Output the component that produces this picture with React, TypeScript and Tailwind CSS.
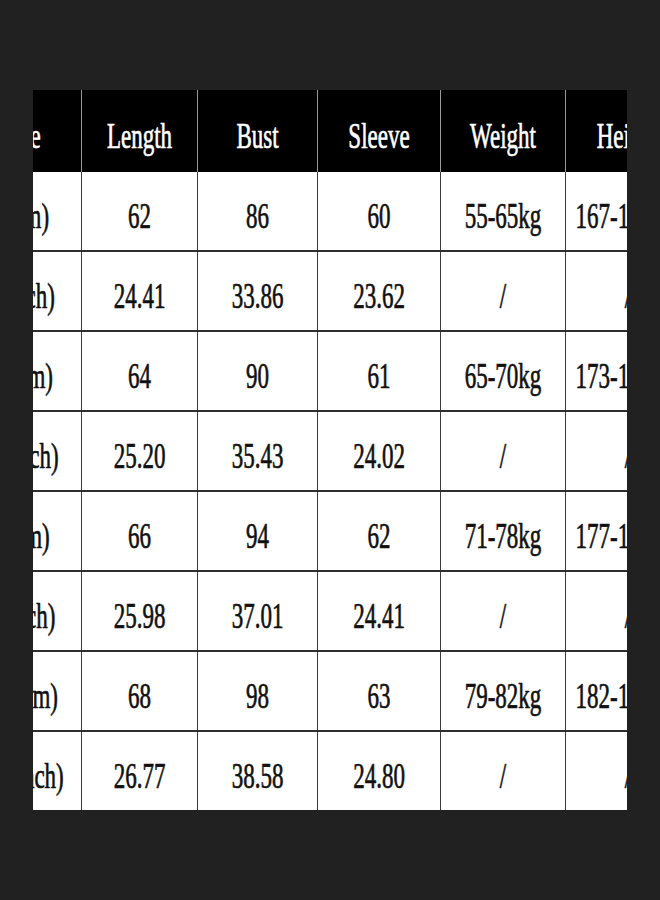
const headers = ["Size", "Length", "Bust", "Sleeve", "Weight", "Height"];

const rows = [
  ["S(cm)", "62", "86", "60", "55-65kg", "167-172cm"],
  ["S(inch)", "24.41", "33.86", "23.62", "/", "/"],
  ["M(cm)", "64", "90", "61", "65-70kg", "173-177cm"],
  ["M(inch)", "25.20", "35.43", "24.02", "/", "/"],
  ["L(cm)", "66", "94", "62", "71-78kg", "177-182cm"],
  ["L(inch)", "25.98", "37.01", "24.41", "/", "/"],
  ["XL(cm)", "68", "98", "63", "79-82kg", "182-187cm"],
  ["XL(inch)", "26.77", "38.58", "24.80", "/", "/"],
];

const cols = "grid grid-cols-[120px_116px_120px_123px_125px_125px]";

function Txt({ children }: { children: string }) {
  return (
    <span className="inline-block translate-y-[5px] scale-y-[1.55] whitespace-nowrap [-webkit-text-stroke:0.45px_currentColor]">
      {children}
    </span>
  );
}

export default function App() {
  return (
    <div className="min-h-[900px] w-[660px] bg-[#212121] pt-[90px] pl-[33px]">
      <div className="h-[720px] w-[594px] overflow-hidden bg-white">
        <div
          className="ml-[-72px] w-[729px] text-[23px] leading-none"
          style={{ fontFamily: '"Liberation Serif", "Times New Roman", serif' }}
        >
          <div className={`${cols} h-[82px] bg-black text-white`}>
            {headers.map((h, i) => (
              <div
                key={h}
                className={`flex items-center justify-center ${
                  i > 0 ? "border-l border-[#9a9a9a]" : ""
                }`}
              >
                <Txt>{h}</Txt>
              </div>
            ))}
          </div>
          {rows.map((r, ri) => (
            <div
              key={ri}
              className={`${cols} h-[80px] border-b-2 border-[#2e2e2e] text-[#111]`}
            >
              {r.map((c, i) => (
                <div
                  key={i}
                  className={`flex items-center justify-center ${
                    i > 0 ? "border-l border-[#3a3a3a]" : ""
                  }`}
                >
                  <Txt>{c}</Txt>
                </div>
              ))}
            </div>
          ))}
        </div>
      </div>
    </div>
  );
}
